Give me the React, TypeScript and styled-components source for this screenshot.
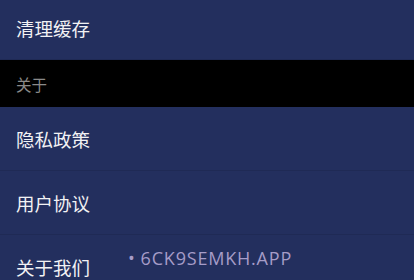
import React from 'react';
import styled, { createGlobalStyle } from 'styled-components';

const GlobalStyle = createGlobalStyle`
    html, body {
        margin: 0;
        padding: 0;
        background: #232f5e;
    }
    body {
        font-family: "Noto Sans", "Noto Sans CJK SC", sans-serif;
        overflow: hidden;
    }
`;

const Page = styled.div`
    position: relative;
    width: 414px;
    height: 280px;
    overflow: hidden;
    background: #232f5e;
`;

const List = styled.div`
    display: flex;
    flex-direction: column;
    margin-top: -4px;
`;

const Row = styled.div`
    display: flex;
    align-items: center;
    height: 64px;
    padding: 0 16px;
    box-sizing: border-box;
    border-bottom: 1px solid #1f2a55;
    color: #f2f2f4;
    font-size: 18.5px;
    font-family: "Noto Sans CJK SC", sans-serif;
`;

const SectionHeader = styled.div`
    display: flex;
    align-items: center;
    height: 47px;
    padding: 0 16px;
    background: #000;
    color: #8a8a8a;
    font-size: 15.5px;
    font-family: "Noto Sans CJK SC", sans-serif;
`;

const Watermark = styled.div`
    position: absolute;
    left: 128px;
    top: 246px;
    display: flex;
    align-items: center;
    gap: 5px;
    color: #a69cc8;
    font-size: 18px;
    font-family: "Open Sans", sans-serif;
    letter-spacing: 0.8px;

    .dot {
        font-size: 18px;
    }
`;

export default function App() {
    return (
        <>
            <GlobalStyle />
            <Page>
                <List>
                    <Row>清理缓存</Row>
                    <SectionHeader>关于</SectionHeader>
                    <Row>隐私政策</Row>
                    <Row>用户协议</Row>
                    <Row>关于我们</Row>
                </List>
                <Watermark>
                    <span className="dot">•</span>
                    <span>6CK9SEMKH.APP</span>
                </Watermark>
            </Page>
        </>
    );
}
